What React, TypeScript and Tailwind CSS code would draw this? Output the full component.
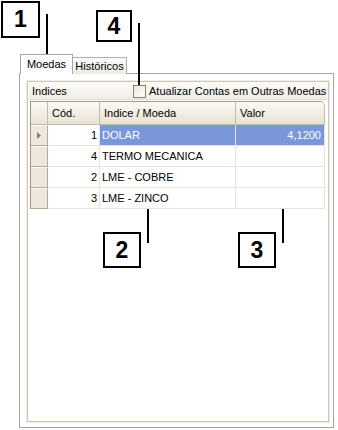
import React from 'react';

interface Row {
  cod: number;
  nome: string;
  valor: string;
  selected?: boolean;
}

const rows: Row[] = [
  { cod: 1, nome: 'DOLAR', valor: '4,1200', selected: true },
  { cod: 4, nome: 'TERMO MECANICA', valor: '' },
  { cod: 2, nome: 'LME - COBRE', valor: '' },
  { cod: 3, nome: 'LME - ZINCO', valor: '' },
];

// numbered callout box used in the manual screenshot
const Callout: React.FC<{ n: string; className: string }> = ({ n, className }) => (
  <div
    className={`absolute flex items-center justify-center border-2 border-black bg-white text-[23px] font-bold text-black ${className}`}
    style={{ fontFamily: '"Liberation Sans", Arial, sans-serif' }}
  >
    {n}
  </div>
);

const Grid: React.FC = () => (
  <div className="ml-[1px] mr-[2px] mt-[1px] overflow-hidden rounded-tr-[5px] border border-[#a39686] border-b-0 border-r-0">
    {/* header */}
    <div className="flex h-[23px] bg-gradient-to-b from-[#fbfaf5] to-[#e8e2d4] border-b border-[#c6bba9]">
      <div className="w-[17px] border-r border-[#c6bba9]" />
      <div className="w-[52px] border-r border-[#c6bba9] pl-[4px] pt-[6px]">Cód.</div>
      <div className="w-[136px] border-r border-[#c6bba9] pl-[4px] pt-[6px]">Indice / Moeda</div>
      <div className="flex-1 border-r border-[#c6bba9] pl-[4px] pt-[6px]">Valor</div>
    </div>
    {rows.map((r) => (
      <div key={r.cod} className="flex h-[21px]">
        <div className="flex w-[17px] items-center justify-center border-r border-b border-[#b5aa98] bg-[#ece8dc] border-t border-t-[#faf9f4]">
          {r.selected && (
            <svg width="4" height="7" viewBox="0 0 4 7">
              <path d="M0 0 L4 3.5 L0 7 Z" fill="#8a8173" />
            </svg>
          )}
        </div>
        <div className="w-[52px] border-r border-b border-[#e8e4da] bg-white pr-[2px] pt-[5px] text-right">{r.cod}</div>
        <div
          className={`w-[136px] border-r border-b border-[#e8e4da] pl-[2px] pt-[5px] ${
            r.selected ? 'bg-[#7b97dc] text-white' : 'bg-white'
          }`}
        >
          {r.nome}
        </div>
        <div
          className={`flex-1 border-r border-b border-[#e8e4da] pr-[3px] pt-[5px] text-right ${
            r.selected ? 'bg-[#7b97dc] text-white' : 'bg-white'
          }`}
        >
          {r.valor}
        </div>
      </div>
    ))}
  </div>
);

export default function App() {
  return (
    <div
      className="relative h-[430px] w-[338px] overflow-hidden bg-white text-[11px] leading-none text-black"
      style={{ fontFamily: 'Tahoma, "Liberation Sans", Arial, sans-serif' }}
    >
      <div className="ml-[19px] w-[315px] pt-[54px]">
        {/* tabs */}
        <div className="relative z-10 flex items-end">
          <div className="ml-[1px] flex h-[20px] w-[53px] items-center justify-center border border-b-0 border-[#a5a5a5] bg-white pb-[1px]">
            Moedas
          </div>
          <div className="flex h-[17px] w-[54px] items-center justify-center border border-l-0 border-b-0 border-[#b1b1b1] bg-gradient-to-b from-[#fbfbf9] to-[#ecebe5]">
            Históricos
          </div>
        </div>
        {/* tab page */}
        <div className="-mt-[1px] h-[355px] border border-[#a5a5a5] bg-white pl-[7px] pr-[4px] pt-[7px]">
          <div className="flex h-[341px] flex-col border border-[#cfc6b8] outline outline-1 outline-[#f1ede6] bg-white p-[1px]">
            <div className="flex h-[17px] items-center whitespace-nowrap bg-gradient-to-b from-[#fbfaf7] to-[#efede6] border-b border-[#ded8ce]">
              <span className="ml-[3px] w-[101px]">Indices</span>
              <span className="inline-block h-[13px] w-[13px] shrink-0 border border-[#8f7e6c] bg-gradient-to-br from-[#e7e6df] to-white" />
              <span className="ml-[3px]">Atualizar Contas em Outras Moedas</span>
            </div>
            <Grid />
          </div>
        </div>
      </div>

      {/* callouts */}
      <Callout n="1" className="left-[1px] top-[1px] h-[37px] w-[39px]" />
      <div className="absolute left-[46px] top-[14px] h-[42px] w-[2px] bg-black" />
      <Callout n="4" className="left-[96px] top-[10px] h-[32px] w-[36px]" />
      <div className="absolute left-[138px] top-[23px] h-[62px] w-[2px] bg-black" />
      <Callout n="2" className="left-[103px] top-[232px] h-[36px] w-[38px]" />
      <div className="absolute left-[147px] top-[209px] h-[34px] w-[2px] bg-black" />
      <Callout n="3" className="left-[238px] top-[232px] h-[36px] w-[38px]" />
      <div className="absolute left-[282px] top-[209px] h-[34px] w-[2px] bg-black" />
    </div>
  );
}
